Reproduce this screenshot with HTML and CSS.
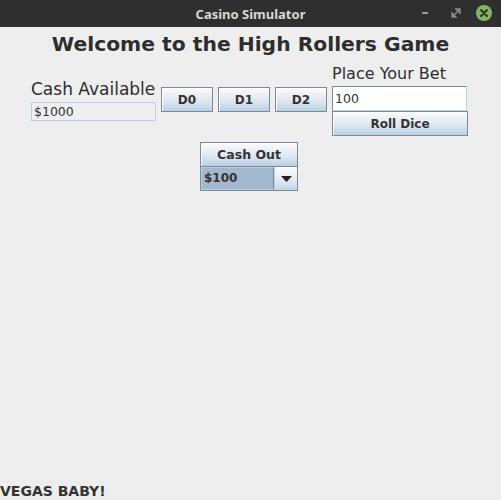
FILE: index.html
```html
<!DOCTYPE html>
<html>
<head>
<meta charset="utf-8">
<link rel="stylesheet" href="styles.css">
</head>
<body>
<div class="window">
  <div class="titlebar">
    <span class="title">Casino Simulator</span>
    <div class="wm-buttons">
      <span class="wm-min"></span>
      <svg class="wm-max" width="10" height="10" viewBox="0 0 10 10"><path d="M1 9 L1 5 L5 9 Z M9 1 L9 5 L5 1 Z M3 7 L7 3" fill="#8a8a8a" stroke="#8a8a8a" stroke-width="1.4"/></svg>
      <span class="wm-close"><svg width="16" height="16" viewBox="0 0 16 16"><path d="M5 5 L11 11 M11 5 L5 11" stroke="#2b3323" stroke-width="2" stroke-linecap="round"/></svg></span>
    </div>
  </div>
  <div class="content">
    <h1 class="heading">Welcome to the High Rollers Game</h1>
    <div class="row">
      <div class="col cash-col">
        <div class="label">Cash Available</div>
        <div class="field readonly">$1000</div>
      </div>
      <button class="btn die">D0</button>
      <button class="btn die">D1</button>
      <button class="btn die">D2</button>
      <div class="col bet-col">
        <div class="label">Place Your Bet</div>
        <div class="field editable">100</div>
        <button class="btn roll">Roll Dice</button>
      </div>
    </div>
    <div class="center-col">
      <button class="btn cashout">Cash Out</button>
      <div class="combo">
        <div class="combo-value">$100</div>
        <div class="combo-arrow"><svg width="11" height="6" viewBox="0 0 11 6"><path d="M0 0 H11 L5.5 6 Z" fill="#222"/></svg></div>
      </div>
    </div>
    <div class="spacer"></div>
    <div class="footer">VEGAS BABY!</div>
  </div>
</div>
</body>
</html>
```

FILE: styles.css
```css
html, body {
  margin: 0;
  padding: 0;
  width: 501px;
  height: 500px;
  overflow: hidden;
  background: #eeeeee;
}
.window {
  display: flex;
  flex-direction: column;
  height: 500px;
  font-family: "DejaVu Sans", sans-serif;
  color: #333333;
}
.titlebar {
  height: 27px;
  background: #2f2f2f;
  display: flex;
  align-items: center;
  justify-content: center;
  position: relative;
}
.title {
  font-family: "Noto Sans", "DejaVu Sans", sans-serif;
  font-weight: bold;
  font-size: 13px;
  color: #d8d8d8;
}
.wm-buttons {
  position: absolute;
  right: 9px;
  top: 5px;
  display: flex;
  align-items: center;
  gap: 0;
}
.wm-min {
  width: 6px;
  height: 2px;
  background: #9a9a9a;
  margin-right: 23px;
}
.wm-max {
  margin-right: 15px;
}
.wm-close {
  width: 16px;
  height: 16px;
  border-radius: 50%;
  background: #86b466;
  display: flex;
}
.content {
  flex: 1;
  display: flex;
  flex-direction: column;
  background: #eeeeee;
}
.heading {
  margin: 5px 0 0 0;
  font-size: 20.3px;
  line-height: 24px;
  font-weight: bold;
  text-align: center;
  color: #2e2e2e;
}
.row {
  display: flex;
  justify-content: center;
  align-items: center;
  gap: 5px;
  margin-top: 7px;
  padding-right: 2px;
}
.col {
  display: flex;
  flex-direction: column;
}
.cash-col {
  width: 125px;
}
.label {
  font-size: 17px;
  line-height: 22px;
  color: #2e2e2e;
  white-space: nowrap;
}
.bet-col .label {
  font-size: 16px;
  line-height: 22px;
  margin-bottom: 1px;
}
.cash-col .label {
  margin-bottom: 2px;
}
.field {
  box-sizing: border-box;
  font-size: 12.5px;
  line-height: 17px;
  padding: 0 2px;
  color: #333333;
}
.readonly {
  height: 19px;
  border: 1px solid #b8cfe5;
  background: #eeeeee;
}
.editable {
  height: 25px;
  border: 1px solid #7a8a99;
  border-right-color: #b8cfe5;
  border-bottom-color: #b8cfe5;
  background: #ffffff;
  padding-top: 3px;
  box-shadow: inset 1px 1px 0 #ffffff;
  width: 135px;
}
.btn {
  box-sizing: border-box;
  font-family: "DejaVu Sans", sans-serif;
  font-weight: bold;
  font-size: 12px;
  color: #333333;
  border: 1px solid #7a8a99;
  background: linear-gradient(to bottom, #fafbfd 0%, #e9eef5 35%, #dce6f0 60%, #b9cfe4 100%);
  box-shadow: inset 1px 1px 0 #ffffff;
  padding: 0;
  margin: 0;
  height: 25px;
}
.die {
  width: 52px;
}
.roll {
  width: 136px;
}
.center-col {
  display: flex;
  flex-direction: column;
  align-items: center;
  margin-top: 6px;
  padding-right: 3px;
}
.cashout {
  width: 98px;
  height: 25px;
  font-size: 12.5px;
}
.combo {
  box-sizing: border-box;
  width: 98px;
  height: 24px;
  display: flex;
  border: 1px solid #7a8a99;
  border-top: none;
  background: #eeeeee;
}
.combo-value {
  flex: 1;
  background: #a3b8cc;
  border: 1px solid #b8cfe5;
  border-right-color: #7a8a99;
  font-weight: bold;
  font-size: 12px;
  line-height: 20px;
  padding-left: 2px;
  color: #333333;
}
.combo-arrow {
  width: 22px;
  display: flex;
  align-items: center;
  justify-content: center;
  background: linear-gradient(to bottom, #fafbfd 0%, #e9eef5 40%, #dce6f0 65%, #c3d4e6 100%);
  border-left: 1px solid #b8cfe5;
}
.spacer {
  flex: 1;
}
.footer {
  font-weight: bold;
  font-size: 14px;
  line-height: 16px;
  color: #333333;
  margin-bottom: 1px;
}
```
